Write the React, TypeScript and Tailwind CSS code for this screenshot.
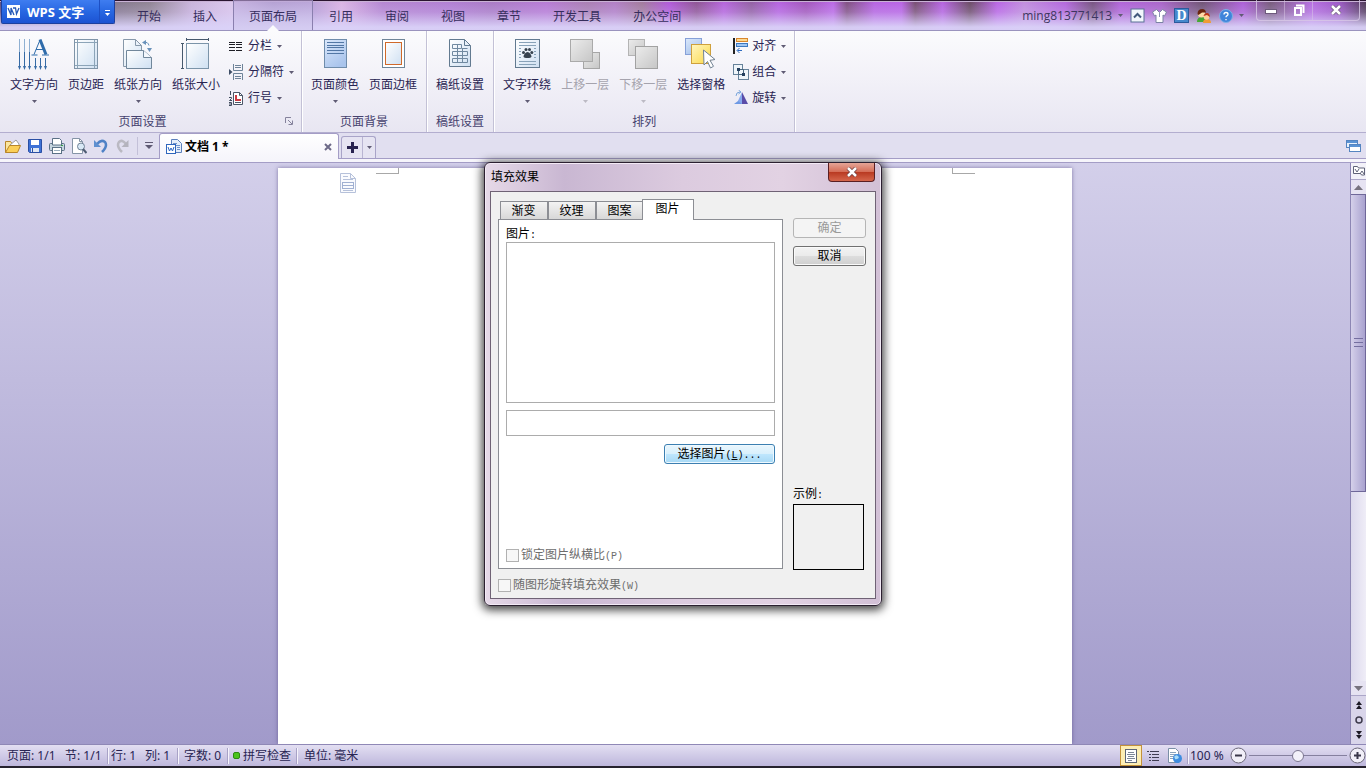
import type { ReactNode } from 'react'

const menuTabs = ['开始', '插入', '页面布局', '引用', '审阅', '视图', '章节', '开发工具', '办公空间']

const titleBackdrop =
  'bg-[linear-gradient(to_bottom,transparent_0%,rgba(214,202,245,0.25)_40%,rgba(218,210,248,0.95)_90%),linear-gradient(to_right,#5a4a7a_0%,#84788a_9%,#8f8391_11%,#c9b3da_14%,#dcc8ec_17%,#a794c4_20%,#b9a0d6_23%,#dcb4e4_25%,#b484d0_28%,#b07cd2_33%,#a878c4_36%,#b678d4_40%,#a87cb0_43%,#b07cc4_45%,#a07898_47%,#b055d8_49%,#8c5090_51%,#b560dc_53%,#905ca0_55%,#b55fe0_57%,#a052b8_59%,#bb66e6_61%,#7d4c7c_62%,#b560e0_64%,#b860e4_66%,#744a6c_67%,#b55fe0_69%,#684860_71%,#b962e4_73%,#c08cdc_75%,#b264dc_78%,#74507c_80%,#b060d8_82%,#a862c8_85%,#6c5070_88%,#ac5cd8_91%,#745878_93%,#b56ae0_96%,#9b55c4_98%,#4a3550_100%)]'

function Caret({ muted = false }: { muted?: boolean }) {
  return (
    <svg width="5" height="3" viewBox="0 0 5 3" className={muted ? 'text-[#bcbac4]' : 'text-[#5f5b74]'} aria-hidden="true">
      <path d="M0 0h5L2.5 3z" fill="currentColor" />
    </svg>
  )
}

function Pic({ w, h, children }: { w: number; h: number; children: ReactNode }) {
  return (
    <svg width={w} height={h} viewBox={`0 0 ${w} ${h}`} fill="none" className="shrink-0" aria-hidden="true">
      {children}
    </svg>
  )
}

/* ---------- Large ribbon icons ---------- */

function Gradients() {
  return (
    <svg width="0" height="0" className="absolute" aria-hidden="true">
      <defs>
        <linearGradient id="paper" x1="0" y1="0" x2="1" y2="1">
          <stop offset="0" stopColor="#ffffff" />
          <stop offset="1" stopColor="#cfe0f2" />
        </linearGradient>
        <linearGradient id="blue" x1="0" y1="0" x2="0.6" y2="1">
          <stop offset="0" stopColor="#dbe8fb" />
          <stop offset="1" stopColor="#a9c4ec" />
        </linearGradient>
        <linearGradient id="yellow" x1="0" y1="0" x2="1" y2="1">
          <stop offset="0" stopColor="#fff6c0" />
          <stop offset="1" stopColor="#fbd848" />
        </linearGradient>
        <linearGradient id="gray" x1="0" y1="0" x2="1" y2="1">
          <stop offset="0" stopColor="#ececec" />
          <stop offset="1" stopColor="#c6c6c6" />
        </linearGradient>
      </defs>
    </svg>
  )
}

const TextDirectionIcon = () => (
  <Pic w={32} h={32}>
    <path d="M1.500 1v28M6.500 1v28M11.500 1v28" stroke="#8fb0d2" />
    <path d="M1.500 14v15M6.500 14v15M11.500 14v15M17.500 20v9M22.500 20v9M27.500 20v9" stroke="#356aa5" />
    <path d="M0 28h3l-1.500 4zM5 28h3l-1.500 4zM10 28h3l-1.500 4zM16 28h3l-1.500 4zM21 28h3l-1.500 4zM26 28h3l-1.500 4z" fill="#356aa5" />
    <path d="M22 1.500l6 15" stroke="#2f6cab" strokeWidth="3" />
    <path d="M22 2l-6 14.500M18 11.500h8M13.500 17h6M24 17h7" stroke="#2f6cab" />
  </Pic>
)

const MarginsIcon = () => (
  <Pic w={32} h={32}>
    <rect x="4.500" y="1.500" width="23" height="29" fill="url(#paper)" stroke="#7f94a8" />
    <path d="M7.500 2v28M24.500 2v28M5 4.500h22M5 27.500h22" stroke="#8ca4b8" />
  </Pic>
)

const OrientationIcon = () => (
  <Pic w={32} h={32}>
    <path d="M1.500 1.500h12l6 6v21h-18z" fill="url(#paper)" stroke="#8798aa" />
    <path d="M13.500 1.500v6h6" stroke="#8798aa" />
    <path d="M4.500 12.500h17l8 7v11h-25z" fill="url(#paper)" stroke="#71879b" />
    <path d="M21.500 12.500v7h8" fill="#f4f8fd" stroke="#71879b" />
    <path d="M22 4.500q4-1 5 3" stroke="#6a92ba" />
    <path d="M20 4.500l4-2.500v5zM25 10h5l-2.500 4z" fill="#6a92ba" />
  </Pic>
)

const PaperSizeIcon = () => (
  <Pic w={32} h={32}>
    <rect x="6.500" y="5.500" width="22" height="25" fill="url(#paper)" stroke="#7b94a9" />
    <path d="M6 1.500h23M6.500 0v3M28.500 0v3M2.500 5v26M1 5.500h3M1 30.500h3" stroke="#46586c" />
  </Pic>
)

const PageColorIcon = () => (
  <Pic w={32} h={32}>
    <rect x="5.500" y="1.500" width="22" height="28" fill="url(#blue)" stroke="#6f8cab" />
    <path d="M8 4.500h17M8 7.500h17M8 9.500h17M8 12.500h17M8 15.500h17" stroke="#5277a5" />
  </Pic>
)

const PageBorderIcon = () => (
  <Pic w={32} h={32}>
    <rect x="5.500" y="1.500" width="22" height="28" fill="#ffffff" stroke="#6f8598" />
    <rect x="8.500" y="4.500" width="16" height="22" fill="url(#paper)" stroke="#d0692a" />
  </Pic>
)

const ManuscriptIcon = () => (
  <Pic w={32} h={32}>
    <path d="M5.500 1.500h15l6 6v21h-21z" fill="url(#paper)" stroke="#627a90" />
    <path d="M20.500 1.500v6h6" stroke="#627a90" />
    <path d="M8.500 6.500h9v4h-9zM8.500 13.500h15v4h-15zM8.500 20.500h15v4h-15zM13.500 6v19M18.500 10v15M18.500 10.500h5" stroke="#7089a0" />
  </Pic>
)

const WrapIcon = () => (
  <Pic w={32} h={32}>
    <rect x="4.500" y="1.500" width="24" height="28" fill="url(#paper)" stroke="#627a90" />
    <path d="M8 4.500h17M8 7.500h17M8 23.500h17M8 26.500h17" stroke="#88a2b8" />
    <path d="M8 10.500h2M8 13.500h2M8 16.500h2M8 19.500h2M23 10.500h2M23 13.500h2M23 16.500h2M23 19.500h2" stroke="#88a2b8" />
    <path d="M16.500 14c2 0 4 3 4 4.500s-2 1.500-4 1.500-4 0-4-1.500 2-4.500 4-4.500z" fill="#37434f" />
    <circle cx="12.500" cy="14.500" r="1.500" fill="#37434f" />
    <circle cx="15" cy="11.500" r="1.500" fill="#37434f" />
    <circle cx="18.500" cy="11.500" r="1.500" fill="#37434f" />
    <circle cx="20.800" cy="14.500" r="1.500" fill="#37434f" />
  </Pic>
)

const ForwardIcon = () => (
  <Pic w={32} h={32}>
    <rect x="14.500" y="14.500" width="16" height="16" fill="url(#gray)" stroke="#a6a6a6" />
    <rect x="1.500" y="1.500" width="22" height="22" fill="url(#gray)" stroke="#aaaaaa" />
  </Pic>
)

const BackwardIcon = () => (
  <Pic w={32} h={32}>
    <rect x="1.500" y="1.500" width="16" height="16" fill="url(#gray)" stroke="#b4b4b4" />
    <rect x="8.500" y="8.500" width="22" height="22" fill="url(#gray)" stroke="#a2a2a2" />
  </Pic>
)

const SelectPaneIcon = () => (
  <Pic w={32} h={32}>
    <rect x="0.500" y="0.500" width="16" height="16" fill="url(#blue)" stroke="#86a0d8" />
    <rect x="6.500" y="6.500" width="19" height="19" fill="url(#yellow)" stroke="#cfa03c" />
    <path d="M18.500 12l11.500 9.500-5 .8 3.500 6-3 1.700-3-6.500-3.500 3.500z" fill="#ffffff" stroke="#718294" />
  </Pic>
)

/* ---------- Small ribbon icons ---------- */

const ColumnsIcon = () => (
  <Pic w={16} h={16}>
    <path d="M0 4.500h6M7 4.500h6M0 6.500h6M7 6.500h6M0 9.500h6M7 9.500h6M0 12.500h6M7 12.500h6" stroke="#1d1d24" />
  </Pic>
)

const BreakIcon = () => (
  <Pic w={16} h={16}>
    <path d="M0 5l3.500 3L0 11z" fill="#3d4d66" />
    <path d="M4.500 0v6.500h9V0M6 1.500h6M6 3.500h6M4.500 16V9.500h9V16M6 12.500h6M6 14.500h6" stroke="#6e8398" />
  </Pic>
)

const LineNumberIcon = () => (
  <Pic w={16} h={16}>
    <path d="M4.500 2.500h6l3 3v9h-9z" fill="#ffffff" stroke="#4b5668" />
    <path d="M6 12.500h6M10.500 2.500v3h3" stroke="#4b5668" />
    <path d="M7 5v5h5" stroke="#cc3a42" strokeWidth="2" />
    <path d="M1.500 1v4M0 7.500h2.500v1L.500 10.500h2.500M0 12.500h2.500v3H0M0 14h2" stroke="#3f4a5c" />
  </Pic>
)

const AlignIcon = () => (
  <Pic w={16} h={16}>
    <path d="M1 0v16" stroke="#222222" strokeWidth="2" />
    <rect x="3.500" y="0.500" width="11" height="3" fill="#fbd890" stroke="#d8862c" />
    <rect x="3.500" y="5.500" width="11" height="3" fill="#9fc6f2" stroke="#3c78c0" />
    <path d="M9 12.500H4.500M6.500 10L4 12.500 6.500 15" stroke="#2d6abf" />
  </Pic>
)

const GroupIcon = () => (
  <Pic w={16} h={16}>
    <rect x="0.500" y="0.500" width="9" height="10" fill="#eff5fa" stroke="#66829a" />
    <rect x="5.500" y="5.500" width="10" height="10" fill="#eff5fa" stroke="#66829a" />
    <rect x="4" y="4" width="3" height="3" fill="#233f5e" />
    <rect x="9" y="9" width="3" height="3" fill="#233f5e" />
    <path d="M5.500 7v3.500H9M7 5.500h3.500V9" stroke="#49667f" />
  </Pic>
)

const RotateIcon = () => (
  <Pic w={16} h={16}>
    <path d="M9 2l6 12H9z" fill="#5a4ca8" />
    <path d="M1 14l8-6v6z" fill="#6c98e4" />
    <path d="M9 2v12l-4-3z" fill="#86a8ec" />
    <path d="M3 6q0-4 4-4M5.500 0L8 2 5.500 4" stroke="#7aa6dc" />
  </Pic>
)

const DocIcon = () => (
  <Pic w={16} h={16}>
    <path d="M5.500.500h6l4 4v9h-10z" fill="#e5eefa" stroke="#5c80bc" />
    <path d="M7 4.500h4M7 6.500h7M11 8.500h3M11 10.500h3" stroke="#6f93cc" />
    <rect x="0.500" y="5.500" width="9" height="9" fill="#ffffff" stroke="#2f66bd" />
    <path d="M2 8l1.500 4L5 9l1.500 3L8 8" stroke="#2763c4" />
  </Pic>
)

/* ---------- Ribbon building blocks ---------- */

type BigProps = { label: string; icon: ReactNode; menu?: boolean; disabled?: boolean }

function BigButton({ label, icon, menu, disabled }: BigProps) {
  return (
    <button
      type="button"
      disabled={disabled}
      className={`flex shrink-0 flex-col items-center px-[5px] pt-[7px] ${disabled ? 'text-[#a5a3ad]' : 'text-[#282452]'}`}
    >
      {icon}
      <span className="mt-[6px] whitespace-nowrap leading-[18px]">{label}</span>
      <span className="mt-[6px] h-[3px]">{menu && <Caret muted={disabled} />}</span>
    </button>
  )
}

function SmallButton({ label, icon }: { label: string; icon: ReactNode }) {
  return (
    <button type="button" className="flex h-[26px] items-center whitespace-nowrap">
      {icon}
      <span className="ml-[3px] mr-[5px] leading-[18px]">{label}</span>
      <Caret />
    </button>
  )
}

function RibbonGroup({ title, children, launcher }: { title: string; children: ReactNode; launcher?: boolean }) {
  return (
    <section
      aria-label={title}
      className="relative flex shrink-0 flex-col border-r border-[#c3c1d6] px-1 shadow-[1px_0_0_#ffffff]"
    >
      <div className="flex h-[82px] items-start">{children}</div>
      <h2 className={`text-center leading-[18px] text-[#46426e] ${launcher ? 'pr-4' : ''}`}>{title}</h2>
      {launcher && (
        <button type="button" aria-label={title} className="absolute bottom-[7px] right-2">
          <Pic w={8} h={8}>
            <path d="M.500 6V.500H6M3 3l4 4M7.500 3.500v4h-4" stroke="#85829c" />
          </Pic>
        </button>
      )}
    </section>
  )
}

/* ---------- Title bar ---------- */

function TitleBar() {
  return (
    <header className={`flex h-[31px] shrink-0 items-start border-b border-[#9a93be] ${titleBackdrop} shadow-[inset_0_1px_0_#2a1430,inset_0_2px_0_#c9b2d6]`}>
      <button
        type="button"
        className="ml-px flex h-6 w-[114px] shrink-0 items-center rounded-b-[2px] border border-t-0 border-[#1c3f9e] bg-linear-to-b from-[#3f7df0] via-[#2867e2] to-[#1c52d2] pl-[5px] font-['Open_Sans','Noto_Sans_CJK_SC',sans-serif] text-[13px] font-bold text-white"
      >
        <Pic w={13} h={13}>
          <rect width="13" height="13" fill="#ffffff" />
          <path d="M1 3l3 7V3l3 7M6 3h2.500l1 6 2.500-6" stroke="#2458b8" strokeWidth="1.300" />
        </Pic>
        <span className="ml-[7px] flex-1 whitespace-nowrap text-left leading-5">WPS 文字</span>
        <span className="flex h-full w-[15px] items-center justify-center border-l border-[#1d4fc4] pt-[3px]">
          <Pic w={5} h={6}>
            <path d="M0 .500h5" stroke="#ffffff" />
            <path d="M0 3h5L2.500 6z" fill="#ffffff" />
          </Pic>
        </span>
      </button>

      <nav className="ml-[6px] flex h-[30px]">
        {menuTabs.map((tab) => (
          <button
            key={tab}
            type="button"
            className={`relative whitespace-nowrap px-4 pt-1 ${
              tab === '页面布局'
                ? 'border-x border-[#8a7fae] bg-linear-to-b from-[#b9a4d8]/60 to-[#d5cdf2] px-[15px]'
                : ''
            }`}
          >
            {tab}
            {tab === '页面布局' && (
              <svg width="12" height="6" viewBox="0 0 12 6" className="absolute -bottom-px left-1/2 -translate-x-1/2" aria-hidden="true">
                <path d="M0 6l6-6 6 6z" fill="#fbfbfd" />
              </svg>
            )}
          </button>
        ))}
      </nav>

      <div className="ml-auto flex h-[30px] items-center pt-px text-[#3d3660]">
        <button type="button" className="mr-[7px] flex items-center gap-[6px] font-['Open_Sans','Noto_Sans_CJK_SC',sans-serif]">
          ming813771413 <Caret />
        </button>
        <div className="flex items-center gap-[7px]">
          <button type="button" aria-label="收起功能区">
            <Pic w={15} h={15}>
              <rect x="1" y="1" width="13" height="13" fill="#f2f6fc" stroke="#5b7396" />
              <path d="M4 9.500l3.500-3.500L11 9.500" stroke="#42597c" strokeWidth="2" />
            </Pic>
          </button>
          <button type="button" aria-label="换肤">
            <Pic w={15} h={15}>
              <path d="M4.500 1.500L.500 4l2 4 1.500-1v7.500h7V7l1.500 1 2-4-4-2.500-3 3z" fill="#ffffff" stroke="#7b83a4" />
              <path d="M7.500 5v4" stroke="#8a94b4" />
            </Pic>
          </button>
          <button type="button" aria-label="Docer" className="flex h-[15px] w-[15px] items-center justify-center border border-[#2b5a9c] bg-[#4688cc] font-['Liberation_Serif',serif] text-[14px] font-bold leading-[14px] text-white">
            D
          </button>
          <button type="button" aria-label="论坛">
            <Pic w={15} h={15}>
              <path d="M1 14q0-5 5-5t5 5z" fill="#45a832" />
              <path d="M7 15q0-4 4-4t4 4z" fill="#ef9b35" />
              <circle cx="5.500" cy="6" r="3.500" fill="#ffdca8" />
              <circle cx="10.500" cy="9" r="2.800" fill="#ffd096" />
              <path d="M1.500 6q0-5 5-5 3 0 3.500 3.500L6 4.500 2.500 7z" fill="#6b2510" />
              <path d="M7.500 8q1-3 3.500-3t3 4l-3-2z" fill="#bb3417" />
            </Pic>
          </button>
          <button type="button" aria-label="帮助" className="ml-px">
            <Pic w={14} h={14}>
              <circle cx="7" cy="7" r="6.500" fill="#3f84da" stroke="#7fb0e6" />
              <path d="M5 5.500q0-2 2-2t2 1.700q0 1-1.200 1.600-.8.400-.8 1.500M7 10v1.300" stroke="#ffffff" strokeWidth="1.300" />
            </Pic>
          </button>
        </div>
        <span className="ml-[6px]"><Caret /></span>
      </div>

      <div className="ml-3 mr-[6px] flex h-[21px] w-[104px] shrink-0 rounded-b-[4px] border border-t-0 border-[#d9c8e6]/80 text-white">
        <button type="button" aria-label="最小化" className="flex flex-1 items-center justify-center pt-1">
          <Pic w={12} h={6}>
            <rect x="0.500" y="0.500" width="11" height="4" fill="#ffffff" stroke="#6e5a7c" />
          </Pic>
        </button>
        <button type="button" aria-label="还原" className="flex flex-1 items-center justify-center border-x border-[#d9c8e6]/50">
          <Pic w={12} h={12}>
            <path d="M3 1.500h7.500V9" stroke="#ffffff" strokeWidth="2" />
            <rect x="2" y="4" width="6" height="7" stroke="#ffffff" strokeWidth="2" />
          </Pic>
        </button>
        <button type="button" aria-label="关闭" className="flex w-[46px] items-center justify-center">
          <Pic w={12} h={10}>
            <path d="M2 1l8 8M10 1L2 9" stroke="#6e5a7c" strokeWidth="4" />
            <path d="M2 1l8 8M10 1L2 9" stroke="#ffffff" strokeWidth="2.500" />
          </Pic>
        </button>
      </div>
    </header>
  )
}

function Ribbon() {
  return (
    <div className="flex h-[102px] shrink-0 border-b border-[#b3aecf] bg-linear-to-b from-[#fbfbfd] to-[#e8e6f2] text-[#282452]">
      <RibbonGroup title="页面设置" launcher>
        <div className="ml-px flex">
          <BigButton label="文字方向" icon={<TextDirectionIcon />} menu />
          <BigButton label="页边距" icon={<MarginsIcon />} />
          <BigButton label="纸张方向" icon={<OrientationIcon />} menu />
          <BigButton label="纸张大小" icon={<PaperSizeIcon />} />
        </div>
        <div className="w-[72px] pl-1 pt-[2px]">
          <SmallButton label="分栏" icon={<ColumnsIcon />} />
          <SmallButton label="分隔符" icon={<BreakIcon />} />
          <SmallButton label="行号" icon={<LineNumberIcon />} />
        </div>
      </RibbonGroup>
      <RibbonGroup title="页面背景">
        <BigButton label="页面颜色" icon={<PageColorIcon />} menu />
        <BigButton label="页面边框" icon={<PageBorderIcon />} />
      </RibbonGroup>
      <RibbonGroup title="稿纸设置">
        <BigButton label="稿纸设置" icon={<ManuscriptIcon />} />
      </RibbonGroup>
      <RibbonGroup title="排列">
        <BigButton label="文字环绕" icon={<WrapIcon />} menu />
        <BigButton label="上移一层" icon={<ForwardIcon />} menu disabled />
        <BigButton label="下移一层" icon={<BackwardIcon />} menu disabled />
        <BigButton label="选择窗格" icon={<SelectPaneIcon />} />
        <div className="w-[60px] pl-[3px] pt-[2px]">
          <SmallButton label="对齐" icon={<AlignIcon />} />
          <SmallButton label="组合" icon={<GroupIcon />} />
          <SmallButton label="旋转" icon={<RotateIcon />} />
        </div>
      </RibbonGroup>
    </div>
  )
}

/* ---------- Quick access and document tabs ---------- */

function DocumentBar() {
  return (
    <div className="flex h-[30px] shrink-0 flex-col border-b border-[#a49dc6] bg-[#e1dff0]">
      <div className="flex h-[26px] items-end border-b border-[#a49dc6]">
        <div className="flex h-[26px] items-center gap-[6px] pl-[5px] pt-px">
          <button type="button" aria-label="打开">
            <Pic w={16} h={16}>
              <path d="M.500 14.500v-11h5l1.500 2h5v3" fill="#fbe6a0" stroke="#b8862a" />
              <path d="M5 7l6-5 3 4v4H6z" fill="#ffffff" stroke="#9b9b9b" />
              <path d="M.500 14.500l4-7h11l-3 7z" fill="#fbcf58" stroke="#b8862a" />
            </Pic>
          </button>
          <button type="button" aria-label="保存">
            <Pic w={16} h={16}>
              <path d="M1.500 1.500h13v13h-12l-1-1z" fill="#3e72d6" stroke="#2a4fa4" />
              <rect x="4" y="2" width="8" height="5" fill="#ffffff" />
              <rect x="4" y="10" width="8" height="4" fill="#e0e8f4" />
              <path d="M5.500 10v4" stroke="#2a4fa4" />
            </Pic>
          </button>
          <button type="button" aria-label="打印">
            <Pic w={16} h={16}>
              <rect x="0.500" y="5.500" width="15" height="7" rx="1" fill="#c6d5df" stroke="#5b7186" />
              <path d="M3.500 7V.500h7l2 2V7z" fill="#ffffff" stroke="#5b7186" />
              <rect x="3.500" y="9.500" width="9" height="6" fill="#ffffff" stroke="#5b7186" />
              <path d="M5 12.500h6" stroke="#9cb0c0" />
              <path d="M12 7.500h2" stroke="#35a244" />
            </Pic>
          </button>
          <button type="button" aria-label="打印预览">
            <Pic w={16} h={16}>
              <path d="M1.500.500h7l3 3v12h-10z" fill="#ffffff" stroke="#8594a6" />
              <path d="M8.500.500v3h3" stroke="#8594a6" />
              <circle cx="10" cy="8.500" r="3.500" fill="#d9e9f6" stroke="#6f8296" />
              <path d="M12 11l3.500 4" stroke="#4d5c72" strokeWidth="2" />
            </Pic>
          </button>
          <button type="button" aria-label="撤销">
            <Pic w={16} h={16}>
              <path d="M4 6q4-5 8-2 3 4-3 10" stroke="#4f82c6" strokeWidth="2.500" />
              <path d="M1 2v7h7z" fill="#5f90d0" />
            </Pic>
          </button>
          <button type="button" aria-label="恢复" disabled>
            <Pic w={16} h={16}>
              <path d="M11 6q-4-5-7-2-3 4 3 10" stroke="#bab9c2" strokeWidth="2.500" />
              <path d="M13.500 2v7h-7z" fill="#b4b3bd" />
            </Pic>
          </button>
          <span className="h-[18px] border-l border-[#c3c0d8]" />
          <button type="button" aria-label="自定义快速访问工具栏" className="ml-px mr-[6px]">
            <Pic w={8} h={7}>
              <path d="M0 .500h8" stroke="#5f5b74" />
              <path d="M0 3h8L4 7z" fill="#5f5b74" />
            </Pic>
          </button>
        </div>

        <div className="-mb-px flex h-[26px] w-[180px] items-center rounded-t-[3px] border border-b-0 border-[#a49dc6] bg-linear-to-b from-white to-[#f6f5fb] pl-[6px] pr-[6px]">
          <DocIcon />
          <span className="ml-[3px] flex-1 text-[12px] font-bold leading-[18px] text-black">文档 1 *</span>
          <button type="button" aria-label="关闭文档">
            <Pic w={8} h={8}>
              <path d="M1 1l6 6M7 1L1 7" stroke="#6d6a88" strokeWidth="2" />
            </Pic>
          </button>
        </div>

        <div className="ml-[2px] flex h-[22px] w-[35px] rounded-t-[3px] border border-b-0 border-[#a9a4c8] bg-[#e6e4f2]">
          <button type="button" aria-label="新建" className="flex flex-1 items-center justify-center">
            <Pic w={11} h={11}>
              <path d="M5.500 0v11M0 5.500h11" stroke="#28224f" strokeWidth="3" />
            </Pic>
          </button>
          <button type="button" aria-label="新建选项" className="flex w-[13px] items-center justify-center border-l border-[#b9b5d2]">
            <Caret />
          </button>
        </div>

        <button type="button" aria-label="窗口" className="mb-[6px] ml-auto mr-[5px]">
          <Pic w={15} h={12}>
            <rect x="0.500" y="0.500" width="11" height="7" fill="#e8f1fb" stroke="#5585c0" />
            <path d="M1 2h10" stroke="#5b93d4" strokeWidth="2" />
            <rect x="3.500" y="4.500" width="11" height="7" fill="#ffffff" stroke="#5585c0" />
            <path d="M4 6h10" stroke="#5b93d4" strokeWidth="2" />
          </Pic>
        </button>
      </div>
      <div className="flex-1 bg-[#f6f5fb]" />
    </div>
  )
}

/* ---------- Workspace ---------- */

function ScrollColumn() {
  return (
    <div className="flex w-4 shrink-0 flex-col border-l border-[#8d86b4] bg-[#e6e3f2]">
      <button type="button" aria-label="视图切换" className="flex h-4 items-center justify-center bg-[#f3f2f9]">
        <Pic w={12} h={12}>
          <path d="M.500 1.500h4l1 1.500h6v7h-3l-1-1.500h-7z" fill="#ffffff" stroke="#5f6278" />
          <path d="M2 4l2 3 2-3M7 9l2-3 2 3" stroke="#5f6278" />
        </Pic>
      </button>
      <button type="button" aria-label="向上滚动" className="flex h-[15px] items-center justify-center border-t border-[#aba6c8]">
        <Pic w={9} h={5}><path d="M0 5l4.500-5L9 5z" fill="#77737f" /></Pic>
      </button>
      <div className="flex flex-[297] flex-col items-center justify-center gap-[3px] border border-l-0 border-[#6f6899] bg-linear-to-r from-[#d5d0ea] to-[#a9a2cf]">
        <span className="h-px w-[9px] bg-[#756fa0]" />
        <span className="h-px w-[9px] bg-[#756fa0]" />
        <span className="h-px w-[9px] bg-[#756fa0]" />
      </div>
      <div className="flex-[190] bg-linear-to-r from-[#dcd9ec] to-[#efedf7]" />
      <button type="button" aria-label="向下滚动" className="flex h-[14px] items-center justify-center">
        <Pic w={9} h={5}><path d="M0 0h9L4.500 5z" fill="#77737f" /></Pic>
      </button>
      <div className="flex h-[49px] flex-col items-center justify-around border-t border-[#aba6c8] bg-[#d9d5ea] py-px">
        <button type="button" aria-label="上一页" className="flex">
          <Pic w={6} h={8}><path d="M0 4l3-4 3 4zM0 8l3-4 3 4z" fill="#1d1b26" /></Pic>
        </button>
        <button type="button" aria-label="选择浏览对象" className="flex">
          <Pic w={8} h={8}><circle cx="4" cy="4" r="3" stroke="#3e3b4c" strokeWidth="1.500" /></Pic>
        </button>
        <button type="button" aria-label="下一页" className="flex">
          <Pic w={6} h={8}><path d="M0 0h6L3 4zM0 4h6L3 8z" fill="#1d1b26" /></Pic>
        </button>
      </div>
    </div>
  )
}

function Workspace() {
  return (
    <main className="flex min-h-0 flex-1">
      <div className="flex flex-1 justify-center bg-linear-to-b from-[#d3cfea] to-[#a19aca] pt-[5px]">
        <div className="flex w-[794px] items-start justify-between bg-white px-[97px] shadow-[0_0_4px_rgba(70,60,120,0.6)]">
          <div className="-ml-[35px] flex items-start">
            <Pic w={16} h={26}>
              <path d="M.500 5.500h10l5 5v14H.500z" fill="#fafbfe" stroke="#b6c1da" />
              <path d="M10.500 5.500v5h5M3 8.500h5M3 11.500h10M3 22.500h10" stroke="#b6c1da" />
              <rect x="2.500" y="14.500" width="11" height="6" stroke="#a1b1d2" />
              <path d="M3 17.500h10" stroke="#a1b1d2" />
            </Pic>
            <span className="ml-5 h-[6px] w-[23px] border-b border-r border-[#a8a8a8]" />
          </div>
          <span className="h-[6px] w-[23px] border-b border-l border-[#a8a8a8]" />
        </div>
      </div>
      <ScrollColumn />
    </main>
  )
}

/* ---------- Status bar ---------- */

function Divider() {
  return <span className="h-4 border-l border-[#a8a2c6] shadow-[1px_0_0_#f6f4fc]" />
}

function StatusBar() {
  return (
    <footer className="flex h-6 shrink-0 items-center whitespace-nowrap border-b-2 border-t border-b-[#26222e] border-t-[#8f88b6] bg-linear-to-b from-[#e3dff2] to-[#beb7dc] pl-[7px] text-[#282452]">
      <span className="w-[58px]">页面: 1/1</span>
      <span className="w-[42px]">节: 1/1</span>
      <Divider />
      <span className="ml-[3px] w-[34px]">行: 1</span>
      <span className="w-8">列: 1</span>
      <Divider />
      <span className="ml-[6px] w-[43px]">字数: 0</span>
      <Divider />
      <button type="button" className="ml-[5px] mr-[5px] flex items-center gap-[3px]">
        <span className="h-[7px] w-[7px] rounded-[2px] border border-[#2e8a12] bg-[#4cc41c]" />
        拼写检查
      </button>
      <Divider />
      <span className="ml-[7px]">单位: 毫米</span>

      <div className="ml-auto flex items-center">
        <button type="button" aria-label="页面视图" className="flex h-[21px] w-[22px] items-center justify-center border border-[#c4923a] bg-[#fdeeb4]">
          <Pic w={12} h={14}>
            <rect x="0.500" y="0.500" width="11" height="13" fill="#ffffff" stroke="#5d6675" />
            <path d="M3 3.500h6M2 5.500h8M3 7.500h6M2 9.500h8M3 11.500h4" stroke="#7d8796" />
          </Pic>
        </button>
        <button type="button" aria-label="大纲视图" className="ml-[5px]">
          <Pic w={13} h={12}>
            <path d="M0 1.500h2M3 1.500h9M2 4.500h2M5 4.500h7M2 7.500h2M5 7.500h7M2 10.500h2M5 10.500h7" stroke="#3f3d52" />
          </Pic>
        </button>
        <button type="button" aria-label="Web版式" className="ml-[7px]">
          <Pic w={16} h={16}>
            <path d="M1.500.500h7l3 3v11h-10z" fill="#ffffff" stroke="#7b8fa6" />
            <path d="M3 4.500h6M3 6.500h6M3 8.500h4M3 10.500h3" stroke="#8aa3bd" />
            <circle cx="10.500" cy="10.500" r="4.500" fill="#3d8ce0" />
            <path d="M7 9q2-3 4-1t-1 3-2-1z" fill="#a9dcf8" />
          </Pic>
        </button>
        <span className="ml-1 flex"><Divider /></span>
        <span className="ml-[2px] w-10">100 %</span>
        <button type="button" aria-label="缩小">
          <Pic w={17} h={17}>
            <circle cx="8.500" cy="8.500" r="7.500" fill="#f1eff8" stroke="#6b6779" />
            <path d="M5 8.500h7" stroke="#3a374a" strokeWidth="2" />
          </Pic>
        </button>
        <input
          type="range"
          aria-label="显示比例"
          min={0}
          max={100}
          defaultValue={50}
          className="mx-[2px] h-[14px] w-[98px] appearance-none bg-transparent bg-[linear-gradient(#85809f,#85809f)] bg-[length:100%_1px] bg-center bg-no-repeat [&::-webkit-slider-thumb]:h-3 [&::-webkit-slider-thumb]:w-3 [&::-webkit-slider-thumb]:appearance-none [&::-webkit-slider-thumb]:rounded-full [&::-webkit-slider-thumb]:border [&::-webkit-slider-thumb]:border-[#7b7690] [&::-webkit-slider-thumb]:bg-[#f3f1fa]"
        />
        <button type="button" aria-label="放大">
          <Pic w={17} h={17}>
            <circle cx="8.500" cy="8.500" r="7.500" fill="#f1eff8" stroke="#6b6779" />
            <path d="M5 8.500h7M8.500 5v7" stroke="#3a374a" strokeWidth="2" />
          </Pic>
        </button>
      </div>
    </footer>
  )
}

/* ---------- Fill effects dialog ---------- */

function Latin({ children }: { children: ReactNode }) {
  return <span className="font-['Liberation_Mono',monospace] text-[10px] leading-none">{children}</span>
}

function FillEffectsDialog() {
  return (
    <div className="pointer-events-none absolute inset-0 flex items-center justify-center">
      <div
        role="dialog"
        aria-labelledby="fill-title"
        className="pointer-events-auto w-[398px] rounded-[6px] border border-[#2b2030] bg-[linear-gradient(to_right,#e6d9e8,#c9b7d2_20%,#dccbdf_50%,#e2d2e3_75%,#d2c0d6)] px-[5px] pb-[6px] text-black shadow-[inset_0_0_0_1px_#f3eaf5,0_2px_10px_2px_rgba(0,0,0,0.75)]"
      >
        <div className="flex h-7 items-start justify-between">
          <h1 id="fill-title" className="pl-px pt-[5px] leading-[18px]">填充效果</h1>
          <button
            type="button"
            aria-label="关闭对话框"
            className="mr-px flex h-[19px] w-[47px] items-center justify-center rounded-b-[4px] border border-t-0 border-[#5a1f22] bg-[linear-gradient(#e4a597,#d56e58_48%,#b93a22_52%,#d5664c)]"
          >
            <Pic w={12} h={10}>
              <path d="M2 1l8 8M10 1L2 9" stroke="#6b3a3c" strokeWidth="4" />
              <path d="M2 1l8 8M10 1L2 9" stroke="#ffffff" strokeWidth="2.500" />
            </Pic>
          </button>
        </div>

        <div className="flex gap-[10px] border border-[#6f6275] bg-[#f0f0f0] pb-[4px] pl-[7px] pr-[9px] pt-[7px]">
          <div className="w-[285px]">
            <div role="tablist" className="flex h-[20px] items-end pl-[2px]">
              {['渐变', '纹理', '图案'].map((tab) => (
                <button
                  key={tab}
                  type="button"
                  role="tab"
                  aria-selected={false}
                  className="h-[18px] w-12 border border-b-0 border-[#8c8e94] bg-linear-to-b from-[#f3f3f3] to-[#d8d8d8] pr-px pt-px leading-4"
                >
                  {tab}
                </button>
              ))}
              <button
                type="button"
                role="tab"
                aria-selected
                className="relative -mb-px -ml-[2px] h-[21px] w-[52px] border border-b-0 border-[#8c8e94] bg-white pb-[2px] pr-px leading-[18px]"
              >
                图片
              </button>
            </div>

            <div className="flex h-[350px] flex-col border border-[#8c8e94] bg-white px-[7px] pt-[5px]">
              <label htmlFor="picture-name" className="h-[17px] leading-[18px]">
                图片<Latin>:</Latin>
              </label>
              <div className="h-[161px] border border-[#acacac]" />
              <input id="picture-name" type="text" readOnly className="mt-[7px] h-[26px] border border-[#acacac] px-1 outline-none" />
              <button
                type="button"
                className="mt-2 h-5 w-[111px] self-end rounded-[3px] border border-[#3c7fb1] bg-[linear-gradient(#eaf6fd,#d9f0fc_48%,#bee6fd_52%,#a7d9f5)] leading-[18px] shadow-[inset_0_0_0_1px_#eef9ff]"
              >
                选择图片
                <Latin>
                  (<u>L</u>)...
                </Latin>
              </button>
              <label className="mb-1 mt-auto flex h-[18px] items-center gap-[2px] leading-[18px] text-[#6d6d6d]">
                <input type="checkbox" disabled className="h-[13px] w-[13px] appearance-none border border-[#b1b1b1] bg-[#f7f7f7]" />
                <span>锁定图片纵横比<Latin>(P)</Latin></span>
              </label>
            </div>

            <label className="mt-[7px] flex h-[18px] items-center gap-[2px] leading-[18px] text-[#6d6d6d]">
              <input type="checkbox" disabled className="h-[13px] w-[13px] appearance-none border border-[#b1b1b1] bg-[#f7f7f7]" />
              <span>随图形旋转填充效果<Latin>(W)</Latin></span>
            </label>
          </div>

          <div className="flex flex-1 flex-col pb-6 pt-[19px]">
            <button type="button" disabled className="h-5 rounded-[3px] border border-[#b5b5b5] bg-[#f4f4f4] leading-[18px] text-[#9a9a9a]">
              确定
            </button>
            <button type="button" className="mt-2 h-5 rounded-[3px] border border-[#707070] bg-[linear-gradient(#f3f3f3,#ebebeb_48%,#dddddd_52%,#cfcfcf)] leading-[18px] shadow-[inset_0_0_0_1px_#fafafa]">
              取消
            </button>
            <p className="mt-auto h-[19px] leading-[18px]">
              示例<Latin>:</Latin>
            </p>
            <div className="h-[66px] w-[71px] border border-black" />
          </div>
        </div>
      </div>
    </div>
  )
}

export default function App() {
  return (
    <div className="relative flex h-screen flex-col overflow-hidden font-['Noto_Sans','Noto_Sans_CJK_SC',sans-serif] text-[12px] leading-[18px] text-[#352d5c]">
      <Gradients />
      <TitleBar />
      <Ribbon />
      <DocumentBar />
      <Workspace />
      <StatusBar />
      <FillEffectsDialog />
    </div>
  )
}
